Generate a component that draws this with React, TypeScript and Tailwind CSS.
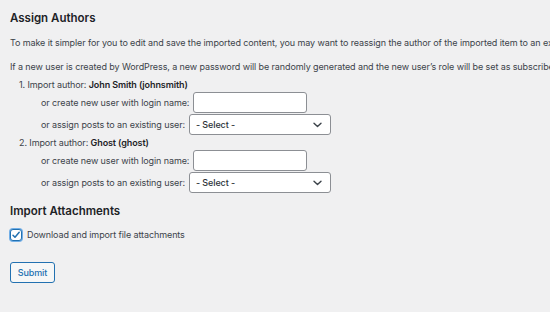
import React from 'react';

function Chevron() {
  return (
    <svg width="9" height="6" viewBox="0 0 9 6" fill="none" stroke="#3c434a" strokeWidth="1.4" strokeLinecap="round" strokeLinejoin="round">
      <path d="M1 1.2l3.5 3.4L8 1.2" />
    </svg>
  );
}

function AuthorBlock({ n, name }: { n: number; name: string }) {
  return (
    <li>
      <div className="h-[14px] leading-[14px] pl-[9px]">
        {n}. Import author: <strong className="font-semibold text-[#1d2327]">{name}</strong>
      </div>
      <div className="flex items-center gap-[4px] h-[21px] pl-[31px]">
        <span>or create new user with login name:</span>
        <input className="w-[114px] h-[21px] bg-white border border-[#8c8f94] rounded-[3px] outline-none" />
      </div>
      <div className="flex items-center gap-[4px] h-[21px] mt-[1px] pl-[31px]">
        <span>or assign posts to an existing user:</span>
        <div className="w-[142px] h-[21px] bg-white border border-[#8c8f94] rounded-[3px] flex items-center justify-between pl-[6px] pr-[8px]">
          <span className="font-medium text-[#2c3338]">- Select -</span>
          <Chevron />
        </div>
      </div>
    </li>
  );
}

export default function App() {
  return (
    <div className="w-[550px] h-[312px] overflow-hidden bg-[#f0f0f1] text-[#3c434a] text-[9px] tracking-[-0.1px] px-[10px] whitespace-nowrap" style={{ fontFamily: 'Inter, "Noto Sans", sans-serif' }}>
      <h2 className="mt-[10px] h-[16px] leading-[16px] text-[11.5px] font-semibold tracking-normal text-[#1d2327]">Assign Authors</h2>
      <p className="mt-[10px] leading-[14px]">
        To make it simpler for you to edit and save the imported content, you may want to reassign the author of the imported item to an existing user of this site.
      </p>
      <p className="mt-[10px] leading-[14px]">
        If a new user is created by WordPress, a new password will be randomly generated and the new user’s role will be set as subscriber.
      </p>
      <ol className="mt-[4px]">
        <AuthorBlock n={1} name="John Smith (johnsmith)" />
        <div className="h-[1px]" />
        <AuthorBlock n={2} name="Ghost (ghost)" />
      </ol>

      <h2 className="mt-[10px] h-[16px] leading-[16px] text-[11.5px] font-semibold tracking-normal text-[#1d2327]">Import Attachments</h2>
      <label className="mt-[10px] flex items-center gap-[5px] h-[12px]">
        <span className="w-[12px] h-[12px] rounded-[3px] border-[1.5px] border-[#2271b1] bg-white flex items-center justify-center shadow-[0_0_0_1px_#72aee6]">
          <svg width="10" height="10" viewBox="0 0 10 10" fill="none" stroke="#2271b1" strokeWidth="1.5" strokeLinecap="round" strokeLinejoin="round">
            <path d="M2 5.2l2 2.1L8.2 2.3" />
          </svg>
        </span>
        <span>Download and import file attachments</span>
      </label>
      <button className="mt-[21px] w-[45px] h-[21px] border border-[#2271b1] rounded-[3px] bg-[#f6f7f7] text-[#2271b1] text-[9px] font-medium">
        Submit
      </button>
    </div>
  );
}
